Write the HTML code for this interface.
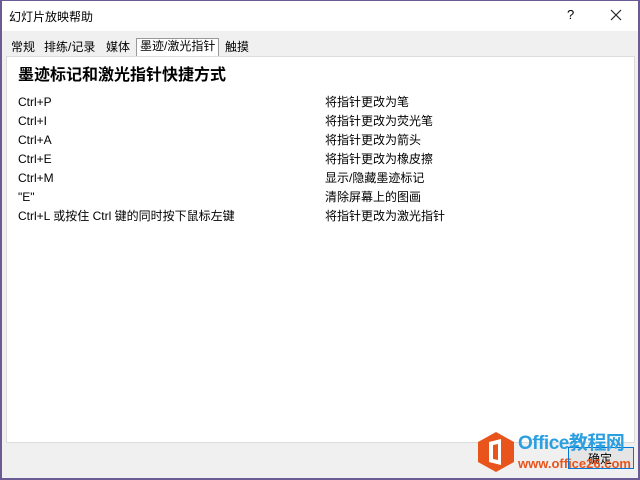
<!DOCTYPE html>
<html><head><meta charset="utf-8"><style>
body{margin:0;width:640px;height:480px;overflow:hidden;background:#f0f0f0;font-family:"Liberation Sans","Noto Sans CJK SC",sans-serif;position:relative;font-size:12px;color:#000}
.b{position:absolute;background:#6b5b95}
.t{position:absolute;left:0;top:0;width:640px;height:31px;background:#fff}
.tab{position:absolute;top:40px;height:15px;line-height:15px;font-size:12px}
.panel{position:absolute;left:6px;top:56px;width:627px;height:385px;background:#fff;border:1px solid #dcdcdc}
.r{position:absolute;font-size:12px;line-height:14px}
</style></head><body>
<div class="t"></div>
<div style="position:absolute;left:9px;top:8px;font-size:12px">幻灯片放映帮助</div>
<div style="position:absolute;left:567px;top:7px;font-size:13px">?</div>
<svg style="position:absolute;left:610px;top:9px" width="12" height="12"><path d="M1 1L11 11M11 1L1 11" stroke="#222" stroke-width="1.2"/></svg>
<div class="panel"></div>
<div class="tab" style="left:11px">常规</div>
<div class="tab" style="left:44px">排练/记录</div>
<div class="tab" style="left:106px">媒体</div>
<div class="tab" style="left:136px;top:38px;height:17px;padding:0 3px;background:#fff;border:1px solid #999;border-bottom:none">墨迹/激光指针</div>
<div class="tab" style="left:225px">触摸</div>
<div class="r" style="left:18px;top:67px;font-size:16px;font-weight:bold;line-height:18px">墨迹标记和激光指针快捷方式</div>
<div class="r" style="left:18px;top:95px">Ctrl+P</div><div class="r" style="left:325px;top:95px">将指针更改为笔</div>
<div class="r" style="left:18px;top:114px">Ctrl+I</div><div class="r" style="left:325px;top:114px">将指针更改为荧光笔</div>
<div class="r" style="left:18px;top:133px">Ctrl+A</div><div class="r" style="left:325px;top:133px">将指针更改为箭头</div>
<div class="r" style="left:18px;top:152px">Ctrl+E</div><div class="r" style="left:325px;top:152px">将指针更改为橡皮擦</div>
<div class="r" style="left:18px;top:171px">Ctrl+M</div><div class="r" style="left:325px;top:171px">显示/隐藏墨迹标记</div>
<div class="r" style="left:18px;top:190px">"E"</div><div class="r" style="left:325px;top:190px">清除屏幕上的图画</div>
<div class="r" style="left:18px;top:209px">Ctrl+L 或按住 Ctrl 键的同时按下鼠标左键</div><div class="r" style="left:325px;top:209px">将指针更改为激光指针</div>
<div style="position:absolute;left:568px;top:447px;width:64px;height:20px;border:1px solid #0078d7;background:#e5e5e5"></div>
<div style="position:absolute;left:588px;top:450px">确定</div>
<svg style="position:absolute;left:476px;top:430px" width="40" height="44"><polygon points="20,2 38,12 38,32 20,42 2,32 2,12" fill="#e8541c"/><path d="M13 12L25 9V35L13 32Z M17 15V29L22 30V14Z" fill="#fff" fill-rule="evenodd"/></svg>
<div style="position:absolute;left:518px;top:433px;font-size:19px;font-weight:bold;color:#2c9fe0;line-height:22px;letter-spacing:-0.5px">Office教程网</div>
<div style="position:absolute;left:518px;top:456px;font-size:13px;font-weight:bold;color:#e8541c;line-height:16px">www.office26.com</div>
<div class="b" style="left:0;top:0;width:640px;height:1px"></div>
<div class="b" style="left:0;top:0;width:2px;height:480px"></div>
<div class="b" style="left:638px;top:0;width:2px;height:480px"></div>
<div class="b" style="left:0;top:478px;width:640px;height:2px"></div>
</body></html>
